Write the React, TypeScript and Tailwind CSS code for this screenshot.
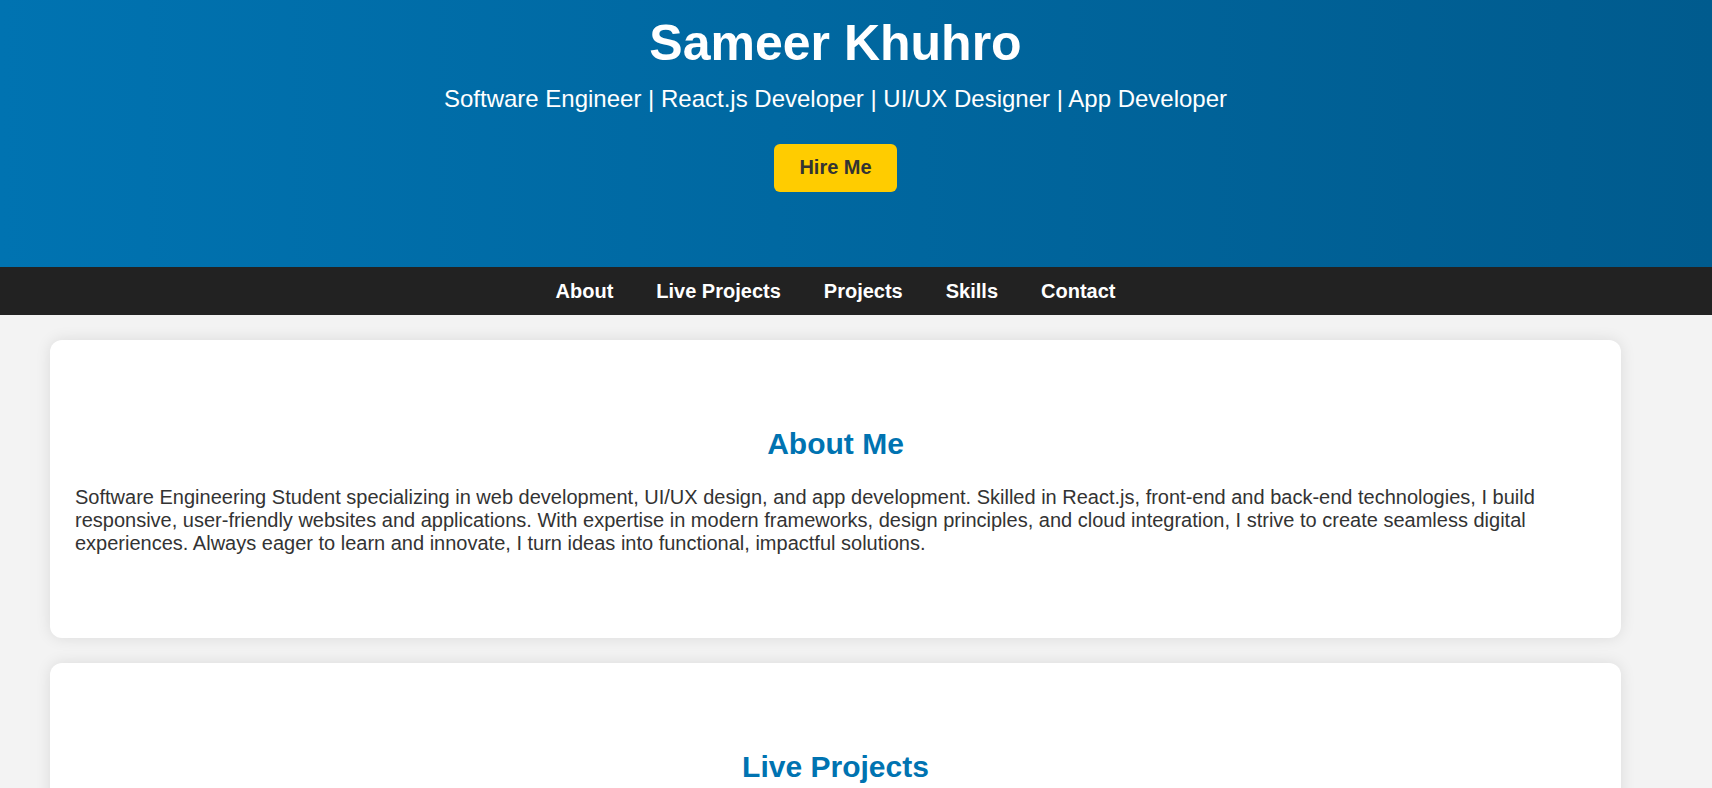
const navLinks = [
  { label: "About", href: "#about" },
  { label: "Live Projects", href: "#live-projects" },
  { label: "Projects", href: "#projects" },
  { label: "Skills", href: "#skills" },
  { label: "Contact", href: "#contact" },
];

export default function App() {
  return (
    <div className="h-screen overflow-hidden bg-[#f3f3f3] font-['Liberation_Sans',Arial,sans-serif] text-xl leading-[23px] text-[#333]">
      <header className="bg-linear-90 from-[#0073b1] to-[#005b8e] pr-[41px] pb-[75px] pt-[14px] text-center text-white">
        <h1 className="text-[50px] font-bold leading-[58px]">Sameer Khuhro</h1>
        <p className="mt-[13px] text-2xl leading-7">
          Software Engineer | React.js Developer | UI/UX Designer | App Developer
        </p>
        <a href="#contact" className="mt-[31px] inline-block rounded-md bg-[#ffcc00] px-[25px] pt-[11px] pb-[13px] font-bold leading-6 text-[#333]">
          Hire Me
        </a>
      </header>
      <nav className="flex justify-center gap-[43px] bg-[#222] py-3 pr-[41px] font-bold leading-6 text-white">
        {navLinks.map((link) => (
          <a key={link.href} href={link.href}>{link.label}</a>
        ))}
      </nav>
      <main className="flex flex-col gap-[25px] pt-[25px] pr-[91px] pl-[50px]">
        <section id="about" className="rounded-xl bg-white px-[25px] pt-[86px] pb-[83px] shadow-[0_0_15px_rgba(0,0,0,0.1)]">
          <h2 className="mb-6 text-center text-[30px] font-bold leading-9 text-[#0073b1]">About Me</h2>
          <p>
            Software Engineering Student specializing in web development, UI/UX design, and app development. Skilled in React.js, front-end and back-end technologies, I build responsive, user-friendly websites and applications. With expertise in modern frameworks, design principles, and cloud integration, I strive to create seamless digital experiences. Always eager to learn and innovate, I turn ideas into functional, impactful solutions.
          </p>
        </section>
        <section id="live-projects" className="rounded-xl bg-white px-[25px] pt-[86px] pb-[83px] shadow-[0_0_15px_rgba(0,0,0,0.1)]">
          <h2 className="text-center text-[30px] font-bold leading-9 text-[#0073b1]">Live Projects</h2>
        </section>
      </main>
    </div>
  );
}
